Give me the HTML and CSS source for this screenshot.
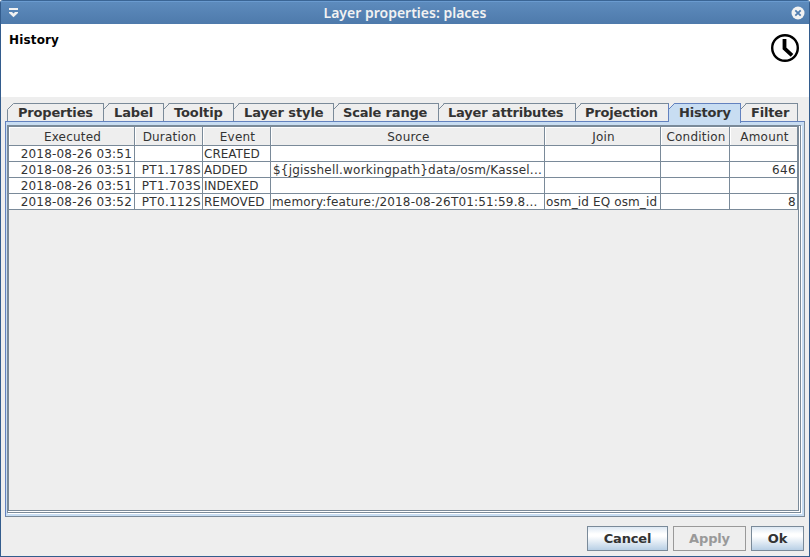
FILE: index.html
```html
<!DOCTYPE html>
<html lang="en">
<head>
<meta charset="utf-8">
<title>Layer properties: places</title>
<link rel="stylesheet" href="styles.css">
</head>
<body>
<div class="window">
  <header class="titlebar">
    <svg class="menu-icon" width="10" height="10" viewBox="0 0 10 10"><path d="M0 0h9v2H0z" fill="#f2f2f2"/><path d="M0 4h9v1L4.500 9.300 0 5z" fill="#f2f2f2"/><path d="M3 4h3L4.500 5.500z" fill="#5682b4"/></svg>
    <span class="title">Layer properties: places</span>
    <svg class="close-icon" width="14" height="14" viewBox="0 0 14 14"><circle cx="7" cy="7" r="6.500" fill="#f2f2f2"/><path d="M4.300 4.300l5.400 5.400M9.700 4.300l-5.400 5.400" stroke="#527eb0" stroke-width="1.800"/></svg>
  </header>
  <section class="banner">
    <h1>History</h1>
    <svg class="clock" width="28" height="28" viewBox="0 0 28 28" fill="none" stroke="#000"><circle cx="14" cy="14" r="12.800" stroke-width="2.400"/><path d="M13.500 5v9.500l7.500 6.800" stroke-width="3.800"/></svg>
  </section>
  <nav class="tabs">
    <div class="tab t1"><svg class="corner" width="8" height="8"><path class="cut" d="M0 0h7L0 7z"/><path class="edge" d="M.5 6.500l6-6"/></svg>Properties</div>
    <div class="tab t2"><svg class="corner" width="8" height="8"><path class="cut" d="M1 0h5L1 5z"/><path class="edge" d="M.5 6.500l6-6"/></svg>Label</div>
    <div class="tab t3"><svg class="corner" width="8" height="8"><path class="cut" d="M1 0h5L1 5z"/><path class="edge" d="M.5 6.500l6-6"/></svg>Tooltip</div>
    <div class="tab t4"><svg class="corner" width="8" height="8"><path class="cut" d="M1 0h5L1 5z"/><path class="edge" d="M.5 6.500l6-6"/></svg>Layer style</div>
    <div class="tab t5"><svg class="corner" width="8" height="8"><path class="cut" d="M1 0h5L1 5z"/><path class="edge" d="M.5 6.500l6-6"/></svg>Scale range</div>
    <div class="tab t6"><svg class="corner" width="8" height="8"><path class="cut" d="M1 0h5L1 5z"/><path class="edge" d="M.5 6.500l6-6"/></svg>Layer attributes</div>
    <div class="tab t7"><svg class="corner" width="8" height="8"><path class="cut" d="M1 0h5L1 5z"/><path class="edge" d="M.5 6.500l6-6"/></svg>Projection</div>
    <div class="tab t8 selected"><svg class="corner" width="8" height="8"><path class="cut" d="M1 0h5.500L1 6z"/><path class="edge" d="M.5 6.500l6-6"/></svg>History</div>
    <div class="tab t9"><svg class="corner" width="8" height="8"><path class="cut" d="M1 0h5L1 5z"/><path class="edge" d="M.5 6.500l6-6"/></svg>Filter</div>
  </nav>
  <main class="panel">
    <div class="scroll">
      <div class="view">
        <table>
          <colgroup><col class="c1"><col class="c2"><col class="c3"><col class="c4"><col class="c5"><col class="c6"><col class="c7"></colgroup>
          <thead><tr><th>Executed</th><th>Duration</th><th>Event</th><th>Source</th><th>Join</th><th>Condition</th><th>Amount</th></tr></thead>
          <tbody>
            <tr><td class="num date">2018-08-26 03:51</td><td></td><td>CREATED</td><td></td><td></td><td></td><td></td></tr>
            <tr><td class="num date">2018-08-26 03:51</td><td class="num">PT1.178S</td><td>ADDED</td><td class="path">${jgisshell.workingpath}data/osm/Kassel...</td><td></td><td></td><td class="num">646</td></tr>
            <tr><td class="num date">2018-08-26 03:51</td><td class="num">PT1.703S</td><td>INDEXED</td><td></td><td></td><td></td><td></td></tr>
            <tr><td class="num date">2018-08-26 03:52</td><td class="num">PT0.112S</td><td>REMOVED</td><td class="feature">memory:feature:/2018-08-26T01:51:59.8...</td><td class="join">osm_id EQ osm_id</td><td></td><td class="num">8</td></tr>
          </tbody>
        </table>
      </div>
    </div>
  </main>
  <footer class="buttons">
    <button class="cancel">Cancel</button>
    <button class="apply" disabled>Apply</button>
    <button class="ok">Ok</button>
  </footer>
</div>
</body>
</html>
```
FILE: styles.css
```css
* { box-sizing: border-box; }
body { margin: 0; font-family: "DejaVu Sans", sans-serif; color: #333; }
.window {
  width: 810px; height: 557px; background: #eee;
  border: 1px solid #335c8d; border-top-color: #3a6595;
  border-radius: 3px 3px 0 0;
  display: flex; flex-direction: column;
}
.titlebar {
  height: 23px; flex: none; display: flex; align-items: center; justify-content: space-between;
  padding: 0 4px 0 8px;
  background: linear-gradient(#5d8bbd, #4e7aab); border-top: 1px solid #6a9bd0;
  color: #f2f2f2;
}
.title { font: 600 14px/20px "Noto Sans", sans-serif; }
.banner {
  height: 73px; flex: none; background: #fff; display: flex; justify-content: space-between;
  padding: 10px 10px 0 8px;
}
h1 { margin: -1px 0 0; font-size: 12px; line-height: 15px; letter-spacing: .15px; color: #000; }
.tabs { display: flex; height: 24px; flex: none; padding: 6px 0 0 6px; }
.tab {
  position: relative; height: 18px; border-top: 1px solid #7a8a99; border-right: 1px solid #7a8a99;
  font-size: 13px; font-weight: bold; line-height: 17px; padding-left: 10px; white-space: nowrap;
  letter-spacing: -.18px;
}
.corner { position: absolute; left: -1px; top: -1px; }
.cut { fill: #eee; }
.edge { stroke: #7a8a99; fill: none; }
.t1 { width: 97px; border-left: 1px solid #7a8a99; }
.t2 { width: 60px; letter-spacing: -.1px; }
.t3 { width: 70px; letter-spacing: -.1px; }
.t4 { width: 100px; letter-spacing: -.1px; }
.t5 { width: 105px; padding-left: 9px; }
.t6 { width: 137px; padding-left: 9px; }
.t7 { width: 93px; padding-left: 9px; border-right-color: #6382bf; }
.t8 { width: 72px; }
.t9 { width: 57px; }
.selected { background: #c8ddf2; height: 20px; border-color: #6382bf; z-index: 1; }
.selected .edge { stroke: #6382bf; }
.panel {
  height: 396px; flex: none; margin: 0 4px; background: #c8ddf2;
  border: 1px solid #7a8a99; border-top-color: #6382bf; border-left-color: #6382bf; padding: 3px 3px 3px 1px;
}
.scroll { height: 100%; border: 1px solid #7a8a99; background: #fff; padding: 0 1px 1px 0; box-shadow: 1px 1px #fff; }
.view { height: 100%; border: 1px solid #7a8a99; background: #eee; }
table { border-collapse: separate; border-spacing: 0; table-layout: fixed; width: 789px; font-size: 12px; color: #333; }
.c1 { width: 126px; }
.c2 { width: 68px; }
.c3 { width: 68px; }
.c4 { width: 274px; }
.c5 { width: 116px; }
.c6 { width: 69px; }
.c7 { width: 68px; }
th {
  height: 19px; padding: 1px 0 0 2px; font-weight: normal; line-height: 16px; letter-spacing: .2px; background: #eee;
  border-right: 1px solid #7a8a99; border-bottom: 1px solid #7a8a99; box-shadow: inset 1px 1px #fff;
}
td {
  height: 16px; padding: 1px 1px 0; line-height: 14px; background: #fff; white-space: nowrap; overflow: hidden;
  border-right: 1px solid #7a8a99; border-bottom: 1px solid #7a8a99;
}
.num { text-align: right; letter-spacing: .35px; }
.date { padding-right: 2px; letter-spacing: .2px; }
.path { padding-left: 2px; letter-spacing: .21px; }
.feature { letter-spacing: .17px; }
.join { letter-spacing: .13px; }
.buttons { display: flex; justify-content: flex-end; gap: 5px; padding: 9px 5px 0 0; }
button {
  height: 25px; padding: 0; font: bold 13px "DejaVu Sans", sans-serif; letter-spacing: -.15px; color: #333;
  border: 1px solid #7a8a99; background: linear-gradient(#dde8f3 0%, #fff 30%, #fff 40%, #b8cfe5 100%);
}
button:disabled { color: #999; border-color: #999; background: #eee; }
.cancel { width: 81px; }
.apply { width: 73px; }
.ok { width: 53px; }
```
